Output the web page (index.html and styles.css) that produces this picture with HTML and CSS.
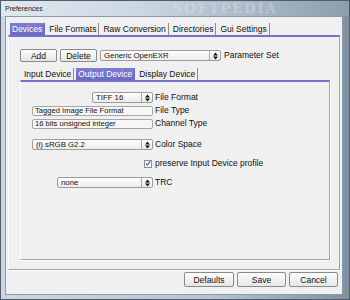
FILE: index.html
```html
<!DOCTYPE html>
<html lang="en">
<head>
  <meta charset="UTF-8">
  <title>Preferences</title>
  <link rel="stylesheet" href="styles.css">
</head>
<body>
  <div class="window">
    <!-- Title bar -->
    <div class="titlebar">
      <span class="title">Preferences</span>
      <span class="watermark">SOFTPEDIA</span>
    </div>

    <div class="client">
      <!-- Top tabs -->
      <div class="tabs">
        <span class="tab selected">Devices</span>
        <span class="tab">File Formats</span>
        <span class="tab">Raw Conversion</span>
        <span class="tab">Directories</span>
        <span class="tab">Gui Settings</span>
      </div>

      <div class="panel outer-panel">
        <!-- Parameter set row -->
        <div class="toolbar">
          <button class="btn small-btn">Add</button>
          <button class="btn small-btn">Delete</button>
          <div class="combo set-combo">
            <span class="combo-text">Generic OpenEXR</span>
            <span class="combo-arrow"><svg width="5" height="8" viewBox="0 0 5 8"><path d="M0 3.5 L2.5 0.5 L5 3.5Z M0 4.5 L5 4.5 L2.5 7.5Z" fill="#111"/></svg></span>
          </div>
          <span class="label">Parameter Set</span>
        </div>

        <!-- Device tabs -->
        <div class="tabs inner-tabs">
          <span class="tab">Input Device</span>
          <span class="tab selected">Output Device</span>
          <span class="tab">Display Device</span>
        </div>

        <div class="panel inner-panel">
          <div class="form">
            <div class="field right">
              <div class="combo tiff-combo">
                <span class="combo-text">TIFF 16</span>
                <span class="combo-arrow"><svg width="5" height="8" viewBox="0 0 5 8"><path d="M0 3.5 L2.5 0.5 L5 3.5Z M0 4.5 L5 4.5 L2.5 7.5Z" fill="#111"/></svg></span>
              </div>
            </div>
            <span class="label">File Format</span>

            <div class="field row-text1">
              <div class="textbox">Tagged Image File Format</div>
            </div>
            <span class="label row-text1">File Type</span>

            <div class="field row-text2">
              <div class="textbox">16 bits unsigned integer</div>
            </div>
            <span class="label row-text2">Channel Type</span>

            <div class="field row-space">
              <div class="combo">
                <span class="combo-text">(i) sRGB G2.2</span>
                <span class="combo-arrow"><svg width="5" height="8" viewBox="0 0 5 8"><path d="M0 3.5 L2.5 0.5 L5 3.5Z M0 4.5 L5 4.5 L2.5 7.5Z" fill="#111"/></svg></span>
              </div>
            </div>
            <span class="label row-space">Color Space</span>

            <div class="field right row-check">
              <span class="checkbox"><svg width="7" height="7" viewBox="0 0 7 7"><path d="M1 3.5 L2.8 5.5 L6 1" stroke="#2a64c8" stroke-width="1.3" fill="none"/></svg></span>
            </div>
            <span class="label row-check">preserve Input Device profile</span>

            <div class="field right row-trc">
              <div class="combo trc-combo">
                <span class="combo-text">none</span>
                <span class="combo-arrow"><svg width="5" height="8" viewBox="0 0 5 8"><path d="M0 3.5 L2.5 0.5 L5 3.5Z M0 4.5 L5 4.5 L2.5 7.5Z" fill="#111"/></svg></span>
              </div>
            </div>
            <span class="label row-trc">TRC</span>
          </div>
        </div>
      </div>

      <!-- Dialog buttons -->
      <div class="footer">
        <button class="btn dlg-btn wide">Defaults</button>
        <button class="btn dlg-btn">Save</button>
        <button class="btn dlg-btn">Cancel</button>
      </div>
    </div>
  </div>
</body>
</html>
```

FILE: styles.css
```css
/* Reset */
body, html {
  margin: 0;
  padding: 0;
  font-family: "Liberation Sans", Arial, sans-serif;
  font-size: 8.5px;
  color: #111;
}

/* Window frame */
.window {
  width: 350px;
  height: 300px;
  box-sizing: border-box;
  border: 1px solid #4f5d6a;
  background: linear-gradient(to right, #cbd8e4, #b5c5d4 60%, #7f909f);
  display: flex;
  flex-direction: column;
}

.titlebar {
  height: 15px;
  display: flex;
  align-items: center;
  padding-left: 4px;
  position: relative;
  background: linear-gradient(to right, #dfe8f0, #cbd7e2 40%, #8d9dac);
}

.title {
  font-size: 7px;
  color: #1a1a1a;
}

.watermark {
  position: absolute;
  left: 172px;
  top: 0;
  font-family: "DejaVu Serif", serif;
  font-weight: bold;
  font-size: 13px;
  line-height: 15px;
  letter-spacing: 2px;
  color: rgba(225, 232, 240, 0.4);
}

.client {
  flex: 1;
  margin: 0 6px 4px 4px;
  background: #f0f0f0;
  border: 1px solid #8a9bab;
  padding: 6px 2px 0 2px;
  display: flex;
  flex-direction: column;
}

/* Tabs */
.tabs {
  display: flex;
  height: 12px;
  margin-left: 2px;
}

.tab {
  padding: 0 2px;
  line-height: 12px;
  border-right: 1px solid #8c8c8c;
  margin-right: 2px;
  white-space: nowrap;
}

.tab.selected {
  background: linear-gradient(#7d7dd2, #6a6ac4);
  color: #fff;
  border-right-color: #6a6ac4;
}

/* Panels */
.panel {
  border-top: 2px solid #7272cc;
  border-left: 1px solid #fff;
  border-right: 1px solid #a3a3a3;
  border-bottom: 1px solid #a3a3a3;
  box-shadow: 1px 1px 0 #fff;
}

.outer-panel {
  flex: 1;
  padding: 12px 9px 9px 11px;
  display: flex;
  flex-direction: column;
}

.inner-panel {
  flex: 1;
  padding: 10px 0 0 11px;
}

.inner-tabs {
  margin-top: 6px;
}

/* Toolbar */
.toolbar {
  display: flex;
  align-items: center;
  height: 13px;
}

.btn {
  font: inherit;
  color: #111;
  border: 1px solid #8a8a8a;
  border-radius: 2px;
  background: linear-gradient(#fdfdfd, #e6e6e6);
  padding: 0;
  box-sizing: border-box;
}

.small-btn {
  width: 37px;
  height: 13px;
  margin-right: 3px;
}

.set-combo {
  width: 121px;
  margin-right: 3px;
}

/* Combo boxes and text boxes */
.combo {
  height: 11px;
  box-sizing: border-box;
  border: 1px solid #9c9c9c;
  border-radius: 2px;
  background: linear-gradient(#fefefe, #ececec);
  display: flex;
  align-items: center;
  font-size: 7.8px;
}

.combo-text {
  flex: 1;
  padding-left: 3px;
  white-space: nowrap;
  overflow: hidden;
}

.combo-arrow {
  width: 10px;
  height: 100%;
  border-left: 1px solid #a8a8a8;
  display: flex;
  align-items: center;
  justify-content: center;
}

.textbox {
  height: 10px;
  box-sizing: border-box;
  border: 1px solid #a6a6a6;
  border-radius: 2px;
  background: #f6f6f6;
  padding-left: 2px;
  font-size: 7.6px;
  line-height: 8px;
  white-space: nowrap;
}

/* Form grid */
.form {
  display: grid;
  grid-template-columns: 121px auto;
  column-gap: 2px;
  align-items: center;
}

.field {
  display: flex;
}

.field.right {
  justify-content: flex-end;
}

.label {
  white-space: nowrap;
  line-height: 11px;
}

.tiff-combo { width: 61px; }
.trc-combo  { width: 96px; }
.field .combo:not(.tiff-combo):not(.trc-combo) { width: 100%; }
.field .textbox { width: 100%; }

.row-text1 { margin-top: 2px; }
.row-text2 { margin-top: 2px; }
.row-space { margin-top: 10px; }
.row-check { margin-top: 8px; }
.row-trc   { margin-top: 8px; }

.checkbox {
  width: 8px;
  height: 8px;
  box-sizing: border-box;
  border: 1px solid #8e8f8f;
  background: #f7f7f7;
  display: flex;
  align-items: center;
  justify-content: center;
  margin-right: 1px;
}

/* Footer */
.footer {
  height: 24px;
  display: flex;
  justify-content: flex-end;
  align-items: flex-start;
  padding: 2px 2px 0 0;
  box-sizing: border-box;
}

.dlg-btn {
  width: 49px;
  height: 15px;
  margin-left: 3px;
}

.dlg-btn.wide { width: 50px; }
```
